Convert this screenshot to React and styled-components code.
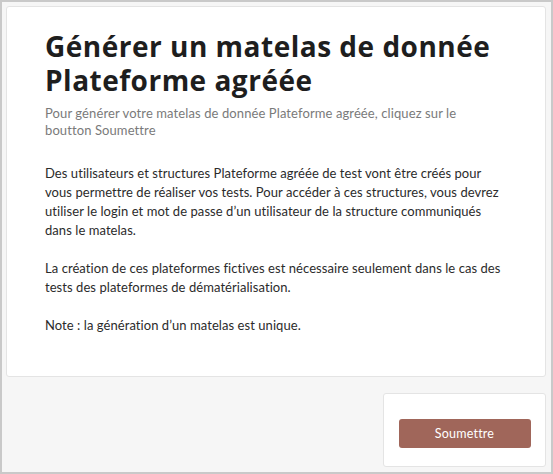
import React from "react";
import styled, { createGlobalStyle } from "styled-components";

const GlobalStyle = createGlobalStyle`
  html, body {
    margin: 0;
    padding: 0;
    background: #ffffff;
  }
  * {
    box-sizing: border-box;
  }
`;

const Frame = styled.div`
  width: 553px;
  height: 474px;
  border: 2px solid #c9c9c9;
  background: #f6f6f6;
  padding: 4px 5px 5px 4px;
  display: flex;
  flex-direction: column;
  gap: 16px;
  font-family: Lato, "Open Sans", sans-serif;
`;

const Card = styled.section`
  background: #ffffff;
  border: 1px solid #e4e4e4;
  border-radius: 3px;
  height: 371px;
  padding: 22px 39px 0 38px;
`;

const Title = styled.h1`
  margin: 0;
  font-family: "Open Sans", Lato, sans-serif;
  font-size: 28px;
  line-height: 34px;
  font-weight: 700;
  letter-spacing: 0.5px;
  white-space: nowrap;
  color: #1e1e1e;
`;

const Lead = styled.p`
  margin: 8px 0 0 0;
  font-size: 13px;
  line-height: 17px;
  letter-spacing: 0.1px;
  color: #7a7a7a;
`;

const Text = styled.p`
  margin: ${(p) => (p.first ? "25px" : "19px")} 0 0 0;
  font-size: 13px;
  line-height: 19px;
  letter-spacing: 0.06px;
  color: #2b2b2b;
`;

const Footer = styled.div`
  display: flex;
  justify-content: flex-end;
`;

const ActionPanel = styled.div`
  width: 163px;
  height: 74px;
  background: #ffffff;
  border: 1px solid #e4e4e4;
  border-radius: 3px;
  display: flex;
  align-items: flex-end;
  justify-content: center;
  padding-bottom: 18px;
`;

const SubmitButton = styled.button`
  width: 132px;
  height: 29px;
  border: none;
  border-radius: 3px;
  background: #a0665a;
  color: #ffffff;
  font-family: inherit;
  font-size: 12.5px;
  letter-spacing: 0.2px;
  cursor: pointer;
`;

export default function App() {
  return (
    <>
      <GlobalStyle />
      <Frame>
        <Card>
          <Title>
            Générer un matelas de donnée
            <br />
            Plateforme agréée
          </Title>
          <Lead>
            Pour générer votre matelas de donnée Plateforme agréée, cliquez sur le
            <br />
            boutton Soumettre
          </Lead>
          <Text first>
            Des utilisateurs et structures Plateforme agréée de test vont être créés pour
            vous permettre de réaliser vos tests. Pour accéder à ces structures, vous devrez
            utiliser le login et mot de passe d’un utilisateur de la structure communiqués
            dans le matelas.
          </Text>
          <Text>
            La création de ces plateformes fictives est nécessaire seulement dans le cas des
            tests des plateformes de dématérialisation.
          </Text>
          <Text>Note : la génération d’un matelas est unique.</Text>
        </Card>
        <Footer>
          <ActionPanel>
            <SubmitButton>Soumettre</SubmitButton>
          </ActionPanel>
        </Footer>
      </Frame>
    </>
  );
}
